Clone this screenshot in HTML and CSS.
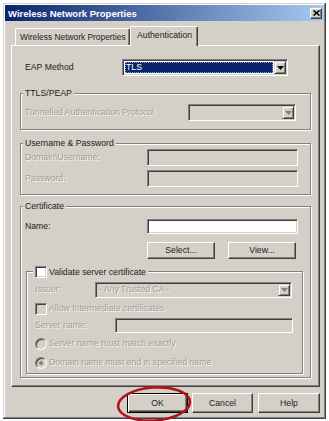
FILE: index.html
```html
<!DOCTYPE html>
<html lang="en">
<head>
  <meta charset="UTF-8" />
  <title>Wireless Network Properties</title>
  <link rel="stylesheet" href="styles.css">
</head>
<body>
  <div class="window">
    <div class="titlebar">
      <span class="title">Wireless Network Properties</span>
      <span class="close">
        <svg width="7" height="6" viewBox="0 0 7 6"><path d="M0.5 0.5l6 5M6.5 0.5l-6 5" stroke="#000" stroke-width="1.6"/></svg>
      </span>
    </div>

    <div class="content">
      <div class="tabs">
        <div class="tab">Wireless Network Properties</div>
        <div class="tab active">Authentication</div>
      </div>

      <div class="panel">
        <div class="row eap">
          <span class="lbl">EAP Method</span>
          <div class="combo focus">
            <span class="value"><span class="sel">TLS</span></span>
            <span class="arrow"><svg width="7" height="4" viewBox="0 0 7 4"><path d="M0 0h7L3.5 4z"/></svg></span>
          </div>
        </div>

        <fieldset class="group ttls">
          <legend>TTLS/PEAP</legend>
          <div class="row proto">
            <span class="lbl dis">Tunnelled Authentication Protocol</span>
            <div class="combo off">
              <span class="value"></span>
              <span class="arrow"><svg width="7" height="4" viewBox="0 0 7 4"><path d="M0 0h7L3.5 4z" fill="#808080"/></svg></span>
            </div>
          </div>
        </fieldset>

        <fieldset class="group user">
          <legend>Username &amp; Password</legend>
          <div class="row field">
            <span class="lbl dis">Domain\Username:</span>
            <span class="input off"></span>
          </div>
          <div class="row field">
            <span class="lbl dis">Password:</span>
            <span class="input off"></span>
          </div>
        </fieldset>

        <fieldset class="group cert">
          <legend>Certificate</legend>
          <div class="row name">
            <span class="lbl">Name:</span>
            <span class="input"></span>
          </div>
          <div class="row actions">
            <span class="btn">Select...</span>
            <span class="btn">View...</span>
          </div>

          <fieldset class="group validate">
            <legend><span class="check"></span><span>Validate server certificate</span></legend>
            <div class="row issuer">
              <span class="lbl dis">Issuer:</span>
              <div class="combo off">
                <span class="value dis">- Any Trusted CA -</span>
                <span class="arrow"><svg width="7" height="4" viewBox="0 0 7 4"><path d="M0 0h7L3.5 4z" fill="#808080"/></svg></span>
              </div>
            </div>
            <div class="row opt">
              <span class="check off"></span>
              <span class="dis">Allow Intermediate certificates</span>
            </div>
            <div class="row server">
              <span class="lbl dis">Server name:</span>
              <span class="input off"></span>
            </div>
            <div class="row opt first">
              <span class="radio"></span>
              <span class="dis">Server name must match exactly</span>
            </div>
            <div class="row opt second">
              <span class="radio on"></span>
              <span class="dis">Domain name must end in specified name</span>
            </div>
          </fieldset>
        </fieldset>
      </div>

      <div class="buttons">
        <span class="btn default">OK</span>
        <span class="btn">Cancel</span>
        <span class="btn help">Help</span>
      </div>
    </div>
  </div>

  <svg class="mark" width="329" height="421" viewBox="0 0 329 421">
    <ellipse cx="154" cy="404" rx="36" ry="16.5" transform="rotate(-4 154 404)" fill="none" stroke="#b3121c" stroke-width="2.6"/>
  </svg>
</body>
</html>
```

FILE: styles.css
```css
* {
  box-sizing: border-box;
}
body {
  margin: 0;
  padding: 3px 0 0 3px;
  width: 329px;
  height: 421px;
  overflow: hidden;
  position: relative;
  background: #fff;
  font: 8.7px/11px "Liberation Sans", Arial, sans-serif;
  color: #1c1c1c;
}
.window {
  width: 323px;
  height: 416px;
  padding: 2px;
  background: #d4d0c8;
  box-shadow: inset -1px -1px #404040, inset 1px 1px #d4d0c8, inset -2px -2px #808080, inset 2px 2px #fff;
}
.titlebar {
  height: 16px;
  display: flex;
  align-items: center;
  justify-content: space-between;
  padding: 0 2px 0 3px;
  background: linear-gradient(to right, #0a246a, #a6caf0);
}
.title {
  color: #fff;
  font-weight: bold;
  font-size: 9.5px;
}
.close {
  width: 12px;
  height: 11px;
  display: flex;
  align-items: center;
  justify-content: center;
  background: #d4d0c8;
  border: 1px solid;
  border-color: #fff #404040 #404040 #fff;
  box-shadow: inset -1px -1px #808080;
}
.content {
  padding: 5px 4px 0 6px;
}

/* tabs */
.tabs {
  display: flex;
  align-items: flex-end;
  height: 19px;
  padding-left: 4px;
}
.tab {
  width: 115px;
  height: 17px;
  padding: 3px 0 0 4px;
  border: 1px solid;
  border-bottom: 0;
  border-color: #fff #404040 #404040 #fff;
  border-radius: 2px 2px 0 0;
  box-shadow: inset -1px 0 #808080;
  white-space: nowrap;
  overflow: hidden;
  font-size: 8.4px;
}
.tab.active {
  width: 68px;
  height: 20px;
  margin-bottom: -1px;
  padding: 3px 0 0 6px;
  position: relative;
  z-index: 1;
  background: #d4d0c8;
  font-size: 8.7px;
}
.panel {
  height: 342px;
  padding: 13px 8px 0;
  border: 1px solid;
  border-color: #fff #404040 #404040 #fff;
  box-shadow: inset -1px -1px #808080;
}

/* rows */
.row {
  display: flex;
  align-items: center;
  white-space: nowrap;
}
.dis {
  color: #a19d96;
  text-shadow: 1px 1px 0 #f6f4f0;
}
.eap {
  height: 17px;
  padding-left: 5px;
}
.eap .lbl {
  width: 97px;
}
.eap .combo {
  width: 166px;
  height: 17px;
}

/* combo boxes and fields */
.combo {
  display: flex;
  padding: 1px;
  background: #fff;
  border: 1px solid;
  border-color: #808080 #fff #fff #808080;
  box-shadow: inset 1px 1px #404040, inset -1px -1px #d4d0c8;
}
.combo.off {
  background: #d4d0c8;
}
.value {
  flex: 1;
  display: flex;
  align-items: center;
  padding-left: 2px;
}
.focus .value {
  margin: 1px;
  padding: 0;
  background: #0a246a;
  outline: 1px dotted #8c9cc8;
  outline-offset: -1px;
}
.sel {
  color: #fff;
  padding-left: 1px;
}
.arrow {
  width: 12px;
  display: flex;
  align-items: center;
  justify-content: center;
  background: #d4d0c8;
  border: 1px solid;
  border-color: #d4d0c8 #404040 #404040 #d4d0c8;
  box-shadow: inset 1px 1px #fff, inset -1px -1px #808080;
}
.input {
  display: block;
  background: #fff;
  border: 1px solid;
  border-color: #808080 #fff #fff #808080;
  box-shadow: inset 1px 1px #404040, inset -1px -1px #d4d0c8;
}
.input.off {
  background: #d4d0c8;
}

/* group boxes */
.group {
  margin: 0;
  padding: 0;
  border: 1px solid #808080;
  box-shadow: 1px 1px #fff, inset 1px 1px #fff;
}
.group legend {
  margin-left: 2px;
  padding: 0 2px;
  background: #d4d0c8;
  line-height: 11px;
}
.ttls {
  margin-top: 12px;
  padding-bottom: 8px;
}
.proto {
  margin-top: 5px;
  padding-left: 4px;
}
.proto .lbl {
  width: 163px;
}
.proto .combo {
  width: 108px;
  height: 17px;
}
.user {
  margin-top: 8px;
  padding-bottom: 7px;
}
.field {
  padding-left: 4px;
}
.field + .field {
  margin-top: 4px;
}
.field .lbl,
.name .lbl {
  width: 122px;
}
.field .input {
  width: 151px;
  height: 17px;
}
.cert {
  margin-top: 6px;
  padding-bottom: 3px;
}
.name {
  margin-top: 7px;
  padding-left: 4px;
}
.name .input {
  width: 151px;
  height: 15px;
}
.actions {
  margin-top: 8px;
  padding-left: 126px;
  gap: 13px;
}
.actions .btn {
  width: 68px;
  height: 17px;
  line-height: 15px;
}
.validate {
  margin: 6px 7px 0 5px;
  padding-bottom: 4px;
}
.validate legend {
  margin-left: 6px;
  line-height: 12px;
}
.validate legend span {
  vertical-align: middle;
}
.check {
  display: inline-block;
  width: 12px;
  height: 12px;
  margin-right: 2px;
  background: #fff;
  border: 1px solid;
  border-color: #808080 #fff #fff #808080;
  box-shadow: inset 1px 1px #404040, inset -1px -1px #d4d0c8;
}
.check.off {
  background: #d4d0c8;
}
.radio {
  width: 12px;
  height: 12px;
  margin-right: 2px;
  display: flex;
  align-items: center;
  justify-content: center;
  border-radius: 50%;
  background: #d4d0c8;
  border: 1px solid;
  border-color: #808080 #fff #fff #808080;
  box-shadow: inset 1px 1px #404040, inset -1px -1px #d4d0c8;
}
.radio.on::after {
  content: "";
  width: 4px;
  height: 4px;
  border-radius: 50%;
  background: #808080;
}
.validate .row {
  padding-left: 8px;
}
.issuer {
  margin-top: 4px;
}
.issuer .lbl {
  width: 60px;
}
.issuer .combo {
  width: 197px;
  height: 16px;
}
.opt {
  height: 12px;
  margin-top: 5px;
}
.server {
  margin-top: 3px;
}
.server .lbl {
  width: 80px;
}
.server .input {
  width: 178px;
  height: 15px;
}
.opt.second {
  margin-top: 7px;
}

/* push buttons */
.btn {
  display: block;
  height: 20px;
  line-height: 18px;
  text-align: center;
  background: #d4d0c8;
  border: 1px solid;
  border-color: #fff #404040 #404040 #fff;
  box-shadow: inset -1px -1px #808080;
}
.buttons {
  display: flex;
  justify-content: flex-end;
  margin-top: 6px;
}
.buttons .btn {
  width: 61px;
  margin-left: 4px;
}
.buttons .help {
  width: 62px;
  margin-left: 5px;
}
.btn.default {
  border-color: #000;
  box-shadow: inset 1px 1px #fff, inset -1px -1px #404040, inset -2px -2px #808080;
}
.mark {
  position: absolute;
  left: 0;
  top: 0;
  pointer-events: none;
}
```
